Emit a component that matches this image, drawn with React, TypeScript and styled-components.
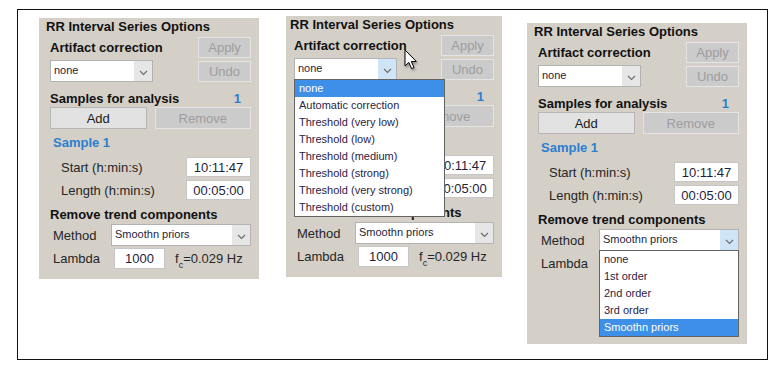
import styled, { createGlobalStyle } from "styled-components";

const GlobalStyle = createGlobalStyle`
  body {
    margin: 0;
    background: #ffffff;
    font-family: "Liberation Sans", Arial, sans-serif;
  }
`;

const Frame = styled.div`
  box-sizing: border-box;
  width: 751px;
  height: 351px;
  margin: 9px 0 0 17px;
  border: 1px solid #111;
  display: flex;
  align-items: flex-start;
  padding-left: 21px;
`;

const Panel = styled.section<{ $w: number; $top: number; $left: number; $pad: number; $h?: number }>`
  position: relative;
  box-sizing: border-box;
  width: ${({ $w }) => $w}px;
  ${({ $h }) => ($h ? `height: ${$h}px;` : "")}
  margin: ${({ $top }) => $top}px 0 0 ${({ $left }) => $left}px;
  padding: 1px 8px 10px ${({ $pad }) => $pad}px;
  background: #d4d0c8;
  color: #1a1a1a;
  font-size: 13px;
`;

const Title = styled.h2`
  margin: 0;
  font-size: 13px;
  line-height: 16px;
  font-weight: 700;
  color: #111;
  white-space: nowrap;
`;

const Body = styled.div`
  padding-left: 4px;
`;

const ActionRow = styled.div<{ $mt: number }>`
  display: grid;
  grid-template-columns: 1fr 53px;
  align-items: center;
  margin-top: ${({ $mt }) => $mt}px;
`;

const SectionLabel = styled.div<{ $mt?: number }>`
  margin-top: ${({ $mt }) => $mt ?? 0}px;
  font-weight: 700;
  line-height: 16px;
  color: #111;
  white-space: nowrap;
`;

const SamplesHeader = styled.div`
  display: flex;
  justify-content: space-between;
  margin-top: 9px;
  line-height: 16px;
  font-weight: 700;
  color: #111;
`;

const Count = styled.span`
  color: #2a7fcf;
  margin-right: 10px;
`;

const ButtonPair = styled.div`
  display: grid;
  grid-template-columns: 1fr 1fr;
  gap: 8px;
`;

const Button = styled.button<{ $off?: boolean; $h?: number }>`
  box-sizing: border-box;
  height: ${({ $h }) => $h ?? 21}px;
  padding: 0;
  font-family: "Liberation Sans", Arial, sans-serif;
  font-size: 13px;
  background: ${({ $off }) => ($off ? "#cbcbcb" : "#e2e2e2")};
  border: 1px solid ${({ $off }) => ($off ? "#e4e4e4" : "#b6b6b6")};
  color: ${({ $off }) => ($off ? "#9d9d9d" : "#1a1a1a")};
`;

const SampleTitle = styled.div`
  margin-top: 6px;
  padding-left: 3px;
  line-height: 16px;
  font-weight: 700;
  color: #2a7fcf;
`;

const FieldRow = styled.div<{ $mt: number }>`
  display: grid;
  grid-template-columns: 1fr 65px;
  align-items: center;
  margin-top: ${({ $mt }) => $mt}px;
`;

const FieldLabel = styled.span<{ $indent: number }>`
  padding-left: ${({ $indent }) => $indent}px;
  color: #262626;
  white-space: nowrap;
`;

const Field = styled.div<{ $h: number }>`
  box-sizing: border-box;
  height: ${({ $h }) => $h}px;
  background: #fff;
  border: 1px solid #c6c6c6;
  display: flex;
  align-items: center;
  justify-content: center;
  color: #1e1e3c;
`;

const MethodRow = styled.div<{ $mt: number }>`
  display: grid;
  grid-template-columns: 61px 1fr;
  align-items: center;
  margin-top: ${({ $mt }) => $mt}px;
`;

const LambdaRow = styled.div`
  display: grid;
  grid-template-columns: 64px 51px auto;
  align-items: center;
  margin-top: 2px;
`;

const Cutoff = styled.span`
  margin-left: 10px;
  color: #262626;
  white-space: nowrap;
  sub {
    font-size: 9px;
    vertical-align: -5px;
    line-height: 0;
  }
`;

const SelectBox = styled.div<{ $w?: number }>`
  position: relative;
  box-sizing: border-box;
  height: 22px;
  width: ${({ $w }) => ($w ? `${$w}px` : "auto")};
  background: #fff;
  border: 1px solid #b3b3b3;
  display: flex;
  align-items: stretch;
`;

const SelectText = styled.span`
  flex: 1;
  padding-left: 3px;
  font-size: 11px;
  line-height: 19px;
  color: #1e1e3c;
  white-space: nowrap;
`;

const ArrowZone = styled.span<{ $open: boolean }>`
  width: 18px;
  background: ${({ $open }) => ($open ? "#cde5f7" : "#e6e6e6")};
  display: flex;
  align-items: center;
  justify-content: center;
  padding-top: 3px;
  box-sizing: border-box;
`;

const OptionList = styled.ul<{ $w?: number }>`
  position: absolute;
  top: 100%;
  left: -1px;
  z-index: 5;
  box-sizing: border-box;
  width: ${({ $w }) => ($w ? `${$w}px` : "calc(100% + 2px)")};
  margin: 0;
  padding: 0;
  list-style: none;
  background: #fff;
  border: 1px solid #646464;
`;

const OptionItem = styled.li<{ $active: boolean }>`
  height: 17px;
  line-height: 17px;
  padding-left: 4px;
  font-size: 11px;
  white-space: nowrap;
  background: ${({ $active }) => ($active ? "#3d8fe8" : "transparent")};
  color: ${({ $active }) => ($active ? "#fff" : "#2a2446")};
`;

const Pointer = styled.svg`
  position: absolute;
  left: 118px;
  top: 33px;
  z-index: 6;
  filter: drop-shadow(1px 2px 1px rgba(0, 0, 0, 0.3));
`;

const artifactOptions = [
  "none",
  "Automatic correction",
  "Threshold (very low)",
  "Threshold (low)",
  "Threshold (medium)",
  "Threshold (strong)",
  "Threshold (very strong)",
  "Threshold (custom)",
];

const trendOptions = ["none", "1st order", "2nd order", "3rd order", "Smoothn priors"];

function Chevron() {
  return (
    <svg width="9" height="6" viewBox="0 0 9 6">
      <path d="M1 1 L4.5 4.5 L8 1" fill="none" stroke="#6a6a6a" strokeWidth="1.1" />
    </svg>
  );
}

function Select(props: {
  value: string;
  width?: number;
  open?: boolean;
  options?: string[];
  listWidth?: number;
}) {
  const { value, width, open = false, options = [], listWidth } = props;
  return (
    <SelectBox $w={width}>
      <SelectText>{value}</SelectText>
      <ArrowZone $open={open}>
        <Chevron />
      </ArrowZone>
      {open && (
        <OptionList $w={listWidth}>
          {options.map((o) => (
            <OptionItem key={o} $active={o === value}>
              {o}
            </OptionItem>
          ))}
        </OptionList>
      )}
    </SelectBox>
  );
}

function OptionsPanel(props: {
  w: number;
  top: number;
  left: number;
  pad: number;
  h?: number;
  artifactOpen?: boolean;
  trendOpen?: boolean;
  cursor?: boolean;
}) {
  const { w, top, left, pad, h, artifactOpen, trendOpen, cursor } = props;
  return (
    <Panel $w={w} $top={top} $left={left} $pad={pad} $h={h}>
      <Title>RR Interval Series Options</Title>
      <Body>
        <ActionRow $mt={2}>
          <SectionLabel>Artifact correction</SectionLabel>
          <Button $off>Apply</Button>
        </ActionRow>
        <ActionRow $mt={2}>
          <Select
            value="none"
            width={103}
            open={artifactOpen}
            options={artifactOptions}
            listWidth={151}
          />
          <Button $off>Undo</Button>
        </ActionRow>
        <SamplesHeader>
          <span>Samples for analysis</span>
          <Count>1</Count>
        </SamplesHeader>
        <ButtonPair>
          <Button $h={22}>Add</Button>
          <Button $h={22} $off>
            Remove
          </Button>
        </ButtonPair>
        <SampleTitle>Sample 1</SampleTitle>
        <FieldRow $mt={6}>
          <FieldLabel $indent={11}>Start (h:min:s)</FieldLabel>
          <Field $h={20}>10:11:47</Field>
        </FieldRow>
        <FieldRow $mt={3}>
          <FieldLabel $indent={11}>Length (h:min:s)</FieldLabel>
          <Field $h={20}>00:05:00</Field>
        </FieldRow>
        <SectionLabel $mt={7}>Remove trend components</SectionLabel>
        <MethodRow $mt={1}>
          <FieldLabel $indent={3}>Method</FieldLabel>
          <Select value="Smoothn priors" open={trendOpen} options={trendOptions} />
        </MethodRow>
        <LambdaRow>
          <FieldLabel $indent={3}>Lambda</FieldLabel>
          <Field $h={21}>1000</Field>
          <Cutoff>
            f<sub>c</sub>=0.029 Hz
          </Cutoff>
        </LambdaRow>
      </Body>
      {cursor && (
        <Pointer width="14" height="21" viewBox="0 0 14 21">
          <path
            d="M1 1 L1 17 L4.8 13.4 L7.6 19.6 L10 18.6 L7.3 12.5 L12.4 12.5 Z"
            fill="#fff"
            stroke="#000"
            strokeWidth="1"
            strokeLinejoin="round"
          />
        </Pointer>
      )}
    </Panel>
  );
}

export default function App() {
  return (
    <>
      <GlobalStyle />
      <Frame>
        <OptionsPanel w={220} top={8} left={0} pad={7} />
        <OptionsPanel w={216} top={6} left={27} pad={4} artifactOpen cursor />
        <OptionsPanel w={220} top={13} left={25} pad={7} h={321} trendOpen />
      </Frame>
    </>
  );
}
